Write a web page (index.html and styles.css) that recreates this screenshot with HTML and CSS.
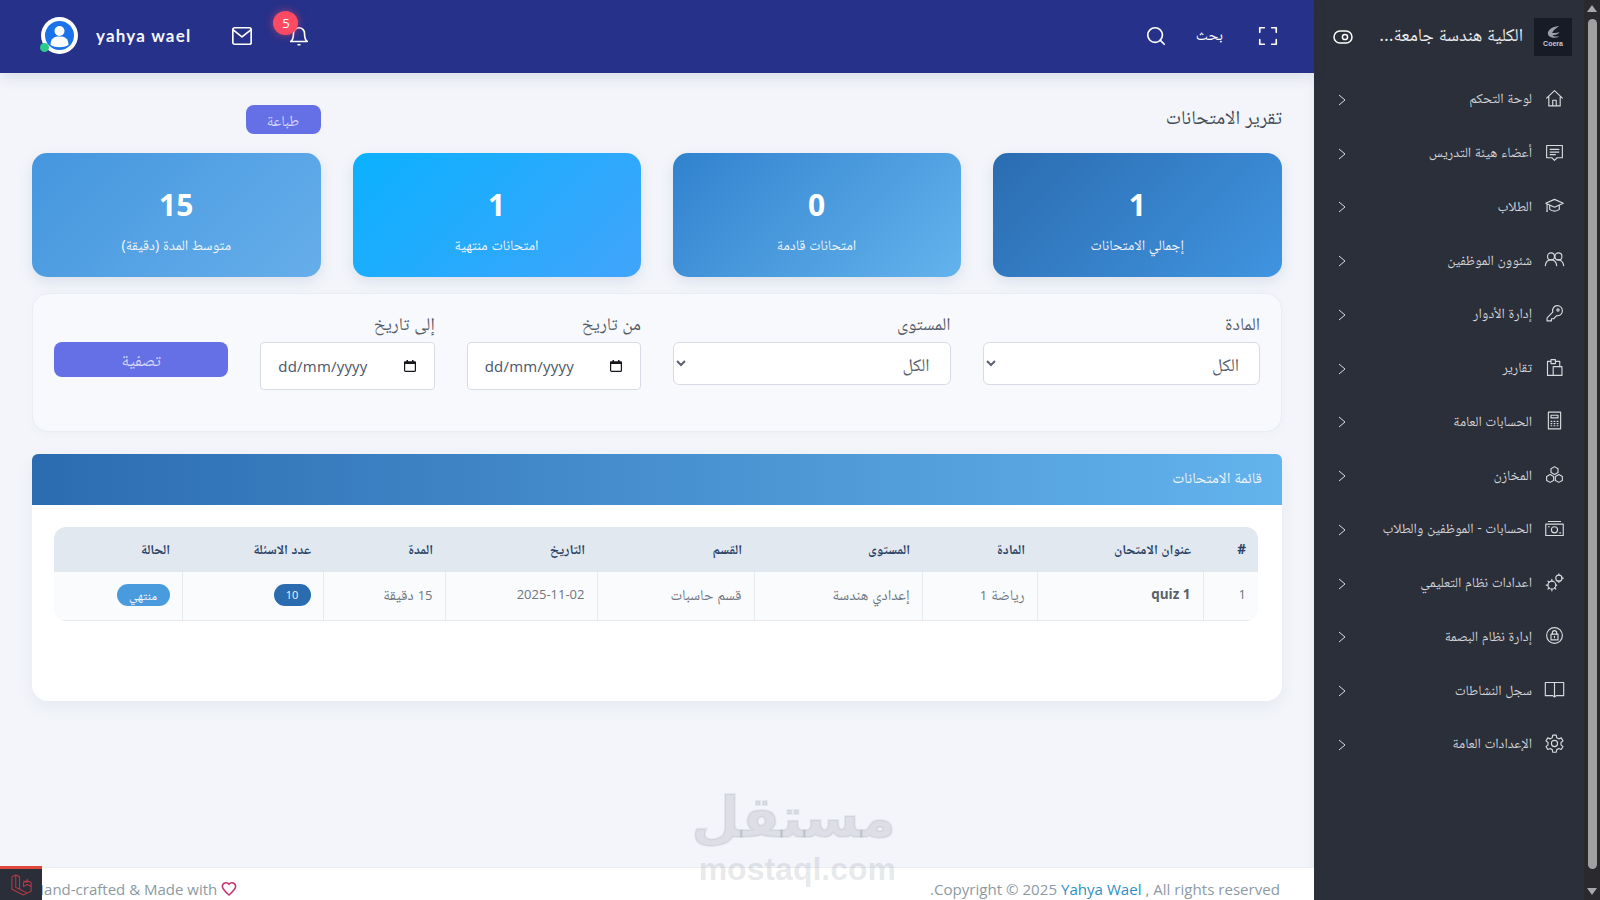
FILE: index.html
```html
<!DOCTYPE html>
<html lang="ar" dir="rtl">
<head>
<meta charset="utf-8">
<title>تقرير الامتحانات</title>
<link rel="stylesheet" href="styles.css">
</head>
<body>
<div class="app">
  <div class="scrollbar">
    <span class="arrow-up"></span>
    <span class="thumb"></span>
    <span class="arrow-down"></span>
  </div>
  <aside class="sidebar">
    <div class="brand">
      <div class="logo">
        <svg class="logo-mark" viewBox="0 0 16 14"><path d="M14 0C8 .5 3 3 2 7c-.7 3.500 3 6.500 9 5.500 1.500-.3 2.500-1 3-1.500-3 .8-6 .5-7-1 3 0 6-1 7.500-3.500C12 7.500 9 7.800 6.500 7.300 8 4 11.500 2.500 14 0z" fill="#9c9fa8"/></svg>
        <span class="logo-text">Coera</span>
      </div>
      <div class="brand-name">الكلية هندسة جامعة...</div>
      <svg class="toggle" viewBox="0 0 20 14" fill="none" stroke="#fff" stroke-width="1.5"><rect x="1" y="1" width="18" height="12" rx="6"/><circle cx="12" cy="7" r="2.6"/></svg>
    </div>
    <nav class="menu">
      <a class="item"><svg class="ico" viewBox="0 0 24 24"><path d="M3 11.500 12 3l9 8.500M5.500 10v10.500h13V10M10 20.500V14h4v6.500"/></svg><span class="label">لوحة التحكم</span><svg class="chev" viewBox="0 0 8 12"><path d="M1 1l6 5-6 5"/></svg></a>
      <a class="item"><svg class="ico" viewBox="0 0 24 24"><path d="M3 4h18v14h-6l-3 3-3-3H3zM7 8.500h10M7 11.500h10M7 14.500h6"/></svg><span class="label">أعضاء هيئة التدريس</span><svg class="chev" viewBox="0 0 8 12"><path d="M1 1l6 5-6 5"/></svg></a>
      <a class="item"><svg class="ico" viewBox="0 0 24 24"><path d="M12 5 22 9.500 12 14 2 9.500zM6.500 12v4.500c3 2.500 8 2.500 11 0V12M3.500 10.500V17M3 18.500h1"/></svg><span class="label">الطلاب</span><svg class="chev" viewBox="0 0 8 12"><path d="M1 1l6 5-6 5"/></svg></a>
      <a class="item"><svg class="ico" viewBox="0 0 24 24"><circle cx="8" cy="8.500" r="4"/><circle cx="16.500" cy="8.500" r="4"/><path d="M1.500 19c.5-4 3-6.500 6.500-6.500s6 2.500 6.500 6.500M15 12.500c4-.5 7 2 7.500 6.500"/></svg><span class="label">شئوون الموظفين</span><svg class="chev" viewBox="0 0 8 12"><path d="M1 1l6 5-6 5"/></svg></a>
      <a class="item"><svg class="ico" viewBox="0 0 24 24"><path d="M15 3c3.500 0 6 2.500 6 6 0 3.500-3 6-6.500 5.500L11 18H8.500v2.500H3.500V17l6.500-6.500C9 6.500 11.500 3 15 3z"/><circle cx="16" cy="8" r="1.300"/></svg><span class="label">إدارة الأدوار</span><svg class="chev" viewBox="0 0 8 12"><path d="M1 1l6 5-6 5"/></svg></a>
      <a class="item"><svg class="ico" viewBox="0 0 24 24"><path d="M10 21H4V5h4V3h5v2h5v6M8 5v2.500h5V5"/><rect x="10.500" y="11" width="10" height="10"/></svg><span class="label">تقارير</span><svg class="chev" viewBox="0 0 8 12"><path d="M1 1l6 5-6 5"/></svg></a>
      <a class="item"><svg class="ico" viewBox="0 0 24 24"><rect x="5" y="2.500" width="14" height="19"/><path d="M8 6h8v3H8zM8 13h1M11.500 13h1M15 13h1M8 15.500h1M11.500 15.500h1M15 15.500h1M8 18h1M11.500 18h1M15 18h1"/></svg><span class="label">الحسابات العامة</span><svg class="chev" viewBox="0 0 8 12"><path d="M1 1l6 5-6 5"/></svg></a>
      <a class="item"><svg class="ico" viewBox="0 0 24 24"><path d="M12 3l4 2.300v4.500L12 12 8 9.800V5.300zM7 12l4 2.300v4.500L7 21l-4-2.200v-4.500zM17 12l4 2.300v4.500L17 21l-4-2.200v-4.500z"/></svg><span class="label">المخازن</span><svg class="chev" viewBox="0 0 8 12"><path d="M1 1l6 5-6 5"/></svg></a>
      <a class="item"><svg class="ico" viewBox="0 0 24 24"><rect x="2" y="7" width="20" height="13"/><circle cx="12" cy="13.500" r="3.500"/><path d="M5 4h14M5 10h1M18 17h1"/></svg><span class="label">الحسابات - الموظفين والطلاب</span><svg class="chev" viewBox="0 0 8 12"><path d="M1 1l6 5-6 5"/></svg></a>
      <a class="item"><svg class="ico" viewBox="0 0 24 24"><circle cx="9" cy="15" r="4.500"/><circle cx="17" cy="7" r="3.500"/><path d="M9 8.500v2M9 19.500v2M2.500 15h2M13.500 15h1M17 2v1.500M17 10.500V12M22 7h-1.500M4.500 10.500l1.500 1.500M4.500 19.500 6 18M12 18l1.500 1.500"/></svg><span class="label">اعدادات نظام التعليمي</span><svg class="chev" viewBox="0 0 8 12"><path d="M1 1l6 5-6 5"/></svg></a>
      <a class="item"><svg class="ico" viewBox="0 0 24 24"><circle cx="12" cy="12" r="9"/><rect x="8" y="10.500" width="8" height="6.500"/><path d="M9.500 10.500V9a2.500 2.500 0 0 1 5 0v1.500M12 13v1.500"/></svg><span class="label">إدارة نظام البصمة</span><svg class="chev" viewBox="0 0 8 12"><path d="M1 1l6 5-6 5"/></svg></a>
      <a class="item"><svg class="ico" viewBox="0 0 24 24"><path d="M1.500 4h21v15H14l-2 1.500-2-1.500H1.500zM12 4v16"/></svg><span class="label">سجل النشاطات</span><svg class="chev" viewBox="0 0 8 12"><path d="M1 1l6 5-6 5"/></svg></a>
      <a class="item"><svg class="ico" viewBox="0 0 24 24"><circle cx="12" cy="12" r="3.500"/><path d="M10 2.500h4l.6 3 2.300 1.200 2.800-1.100 2 3.400-2.300 1.900v2.600l2.300 2-2 3.400-2.800-1.100-2.300 1.200-.6 3h-4l-.6-3-2.300-1.200-2.800 1.100-2-3.400 2.300-2v-2.600L2.300 9l2-3.400 2.800 1.100 2.300-1.200z"/></svg><span class="label">الإعدادات العامة</span><svg class="chev" viewBox="0 0 8 12"><path d="M1 1l6 5-6 5"/></svg></a>
    </nav>
  </aside>
  <div class="main">
    <header class="topbar">
      <div class="top-group">
        <svg class="top-ico" viewBox="0 0 24 24"><path d="M3 8V3h5M16 3h5v5M21 16v5h-5M8 21H3v-5"/></svg>
        <span class="search-word">بحث</span>
        <svg class="top-ico" viewBox="0 0 24 24"><circle cx="11" cy="11" r="8"/><path d="M21 21l-4.500-4.500"/></svg>
      </div>
      <div class="top-group">
        <div class="bell-wrap">
          <svg class="top-ico bell" viewBox="0 0 24 24"><path d="M18 9a6 6 0 0 0-12 0c0 7-3 9-3 9h18s-3-2-3-9M11 21.500h2"/></svg>
          <span class="badge">5</span>
        </div>
        <svg class="top-ico mail" viewBox="0 0 24 24"><rect x="2" y="3" width="20" height="18" rx="2"/><path d="M2 5l10 8 10-8"/></svg>
        <span class="username">yahya wael</span>
        <div class="avatar">
          <svg viewBox="0 0 37 37"><circle cx="18.500" cy="18.500" r="18.500" fill="#fff"/><circle cx="18.500" cy="18.500" r="14.500" fill="#1a73e8"/><circle cx="18.500" cy="14" r="5" fill="#fff"/><path d="M9.500 28c0-7 4-8.500 9-8.500s9 1.500 9 8.500c-5 3-13 3-18 0z" fill="#fff"/></svg>
          <span class="online"></span>
        </div>
      </div>
    </header>
    <div class="content">
      <div class="title-row">
        <h1 class="page-title">تقرير الامتحانات</h1>
        <button class="btn print">طباعة</button>
      </div>
      <section class="stats">
        <div class="stat stat-a"><strong>1</strong><span>إجمالي الامتحانات</span></div>
        <div class="stat stat-b"><strong>0</strong><span>امتحانات قادمة</span></div>
        <div class="stat stat-c"><strong>1</strong><span>امتحانات منتهية</span></div>
        <div class="stat stat-d"><strong>15</strong><span>متوسط المدة (دقيقة)</span></div>
      </section>
      <form class="filters">
        <div class="field"><label>المادة</label><select><option>الكل</option></select></div>
        <div class="field"><label>المستوى</label><select><option>الكل</option></select></div>
        <div class="field"><label>من تاريخ</label><div class="date" dir="ltr"><span>dd/mm/yyyy</span><svg viewBox="0 0 12 12"><path class="cal-top" d="M0 1.500h12V4H0zM2.500 0h1.500v2H2.500zM8 0h1.500v2H8z"/><rect class="cal-body" x=".6" y="2" width="10.800" height="9.400" rx="1"/></svg></div></div>
        <div class="field"><label>إلى تاريخ</label><div class="date" dir="ltr"><span>dd/mm/yyyy</span><svg viewBox="0 0 12 12"><path class="cal-top" d="M0 1.500h12V4H0zM2.500 0h1.500v2H2.500zM8 0h1.500v2H8z"/><rect class="cal-body" x=".6" y="2" width="10.800" height="9.400" rx="1"/></svg></div></div>
        <button type="button" class="btn filter-btn">تصفية</button>
      </form>
      <section class="list-card">
        <div class="list-head">قائمة الامتحانات</div>
        <div class="table-wrap">
          <table>
            <colgroup><col class="c-num"><col class="c-title"><col class="c-sub"><col class="c-lvl"><col class="c-dep"><col class="c-date"><col class="c-dur"><col class="c-cnt"><col class="c-st"></colgroup>
            <thead><tr><th>#</th><th>عنوان الامتحان</th><th>المادة</th><th>المستوى</th><th>القسم</th><th>التاريخ</th><th>المدة</th><th>عدد الاسئلة</th><th>الحالة</th></tr></thead>
            <tbody><tr><td class="num">1</td><td class="bold">quiz 1</td><td>رياضة <span class="num">1</span></td><td>إعدادي هندسة</td><td>قسم حاسبات</td><td class="num">2025-11-02</td><td><span class="num">15</span> دقيقة</td><td><span class="pill pill-dark">10</span></td><td><span class="pill pill-light">منتهي</span></td></tr></tbody>
          </table>
        </div>
      </section>
    </div>
    <footer class="footer">
      <span class="copy">Copyright © 2025 <a class="link">Yahya Wael</a> , All rights reserved.</span>
      <span class="made" dir="ltr">Hand-crafted &amp; Made with <svg class="heart" viewBox="0 0 24 24"><path d="M12 21C5 15 2 12 2 8a5.500 5.500 0 0 1 10-3 5.500 5.500 0 0 1 10 3c0 4-3 7-10 13z"/></svg></span>
    </footer>
  </div>
</div>
<div class="watermark"><div class="wm-ar">مستقل</div><div class="wm-en">mostaql.com</div></div>
<div class="debugbar"><svg viewBox="0 0 24 24"><path d="M2 4l4-2 4 2v13l8 4 4-2v-5l-4-2-4 2v-4l4-2 4 2v4M2 4v13l12 6 4-2M6 2v13l8 4M10 17l-4-2M18 6v4M14 8l4 2"/></svg></div>
</body>
</html>
```
FILE: styles.css
```css
* { box-sizing: border-box; }
html, body { margin: 0; height: 100%; overflow: hidden; }
body { font-family: "Open Sans", "Noto Naskh Arabic", "DejaVu Sans", sans-serif; color: #4a5568; background: #f3f5fa; }
.app { display: flex; height: 900px; width: 1600px; }

.scrollbar { width: 16px; flex: none; background: #2a2a2c; display: flex; flex-direction: column; align-items: center; padding: 5px 0; }
.thumb { width: 9px; flex: 1; background: #a0a0a0; border-radius: 5px; margin: 7px 0 19px; }
.arrow-up { width: 0; height: 0; border: 5px solid transparent; border-top: 0; border-bottom: 7px solid #a8a8a8; }
.arrow-down { width: 0; height: 0; border: 5px solid transparent; border-bottom: 0; border-top: 7px solid #a8a8a8; }

.sidebar { width: 270px; flex: none; background: #2b2f3a; color: #d2d4d8; }
.brand { height: 73px; display: flex; align-items: center; padding: 0 12px 0 19px; }
.logo { width: 38px; height: 38px; background: #171b25; display: flex; flex-direction: column; align-items: center; justify-content: center; flex: none; }
.logo-mark { width: 15px; height: 13px; }
.logo-text { font-family: "Liberation Sans", sans-serif; font-size: 7px; font-weight: 700; color: #c8cad0; line-height: 9px; }
.brand-name { flex: 1; margin: -5px 11px 0 0; font-size: 18.3px; line-height: 28px; color: #eceef0; white-space: nowrap; }
.toggle { width: 20px; height: 14px; flex: none; }
.menu { display: flex; flex-direction: column; }
.item { height: 53.75px; display: flex; align-items: center; padding: 0 19px 0 24px; }
.ico { width: 21px; height: 21px; flex: none; margin-bottom: 3px; fill: none; stroke: #d8dadd; stroke-width: 1.3; stroke-linejoin: round; stroke-linecap: round; }
.label { flex: 1; margin: 0 12px 3px 0; font-size: 14px; line-height: 20px; white-space: nowrap; }
.chev { width: 8px; height: 12px; flex: none; fill: none; stroke: #d8dadd; stroke-width: 1; }

.main { flex: 1; min-width: 0; display: flex; flex-direction: column; box-shadow: inset -12px 0 12px -12px rgba(0,0,0,.06); }
.topbar { height: 73px; flex: none; background: #263189; display: flex; justify-content: space-between; align-items: center; padding: 0 35px 2px 41px; box-shadow: 0 4px 14px rgba(40,50,90,.12); color: #fff; }
.top-group { display: flex; align-items: center; }
.top-ico { width: 22px; height: 22px; fill: none; stroke: #fff; stroke-width: 1.8; stroke-linecap: round; stroke-linejoin: round; flex: none; }
.search-word { margin: -3px 34px 0 29px; font-size: 15.5px; line-height: 24px; }
.bell-wrap { position: relative; width: 22px; height: 22px; }
.bell { display: block; }
.badge { position: absolute; top: -14px; right: 12px; width: 25px; height: 24px; border-radius: 50%; background: #ff4a63; box-shadow: 0 0 8px rgba(255,74,99,.55); color: #fff; font-size: 13px; display: flex; align-items: center; justify-content: center; }
.mail { margin: 0 35px 0 40px; }
.username { font-family: "Lato", sans-serif; font-weight: 700; font-size: 17px; letter-spacing: 1.2px; color: #f4f6fb; margin-left: 18px; }
.avatar { position: relative; width: 37px; height: 37px; }
.avatar svg { display: block; width: 37px; height: 37px; }
.online { position: absolute; left: -1px; bottom: 2px; width: 9px; height: 9px; border-radius: 50%; background: #2bc98a; }

.content { flex: 1; padding: 32px 32px 0; display: flex; flex-direction: column; }
.title-row { display: grid; grid-template-columns: 289.5px 288px 288px 1fr; column-gap: 32px; height: 29px; margin-bottom: 19px; align-items: center; }
.page-title { grid-column: 1 / span 3; margin: -5px 0 0; font-size: 19.600px; line-height: 30px; font-weight: 400; color: #444a55; }
.btn { font-family: inherit; border: 0; background: #656fe6; color: rgba(255,255,255,.72); border-radius: 8px; }
.print { width: 75px; height: 29px; font-size: 15px; line-height: 20px; padding: 0; justify-self: start; }

.stats { display: grid; grid-template-columns: 289.5px 288px 288px 1fr; gap: 32px; }
.stat { height: 124px; border-radius: 15px; display: flex; flex-direction: column; align-items: center; color: #fff; padding-top: 32px; box-shadow: 0 5px 14px rgba(60,90,140,.13); }
.stat strong { font-size: 30px; line-height: 40px; font-weight: 700; }
.stat span { margin-top: 10px; font-size: 14.4px; line-height: 20px; color: #f2f6fb; }
.stat-a { background: linear-gradient(135deg, #2b6cb0, #4094e0); }
.stat-b { background: linear-gradient(135deg, #3182ce, #63b3ed); }
.stat-c { background: linear-gradient(135deg, #0bb1ff, #41a4fb); }
.stat-d { background: linear-gradient(135deg, #4496de, #66aeea); }

.filters { margin-top: 16px; background: #f7f9fd; border: 1px solid #e9edf4; border-radius: 16px; padding: 21px 21px 41px; display: grid; grid-template-columns: 277.5px 277.5px 1fr 1fr 1fr; column-gap: 32px; align-items: start; box-shadow: 0 2px 8px rgba(60,80,120,.03); }
.field { display: flex; flex-direction: column; }
.field label { font-size: 18px; line-height: 16px; margin-bottom: 11px; color: #555c68; }
.field select { height: 43px; background: #fff; border: 1px solid #d6dbe6; border-radius: 6px; padding: 0 16px; font-family: inherit; font-size: 18px; color: #5b6270; }
.date { height: 48px; background: #fff; border: 1px solid #d6dbe6; border-radius: 4px; padding: 0 18px 0 17px; font-size: 15px; color: #4a5568; display: flex; align-items: center; justify-content: space-between; letter-spacing: .2px; }
.date svg { width: 12px; height: 12px; }
.cal-top { fill: #15171c; }
.cal-body { fill: none; stroke: #15171c; stroke-width: 1.2; }
.filter-btn { margin-top: 27px; height: 35px; width: 100%; font-size: 17px; line-height: 24px; padding: 0; }

.list-card { margin-top: 22px; background: #fff; border-radius: 6px 6px 16px 16px; box-shadow: 0 6px 16px rgba(60,80,120,.07); height: 247px; }
.list-head { height: 51px; border-radius: 6px 6px 0 0; background: linear-gradient(90deg, #2b6cb0, #63b3ed); color: #f0f5fb; font-size: 15.3px; display: flex; align-items: center; padding: 0 20px; }
.table-wrap { margin: 22px 24px 0 22px; border-radius: 12px; overflow: hidden; }
table { width: 100%; border-collapse: collapse; table-layout: fixed; }
.c-num { width: 55px; } .c-title { width: 166px; } .c-sub { width: 115px; } .c-lvl { width: 168px; } .c-dep { width: 157px; } .c-date { width: 152px; } .c-dur { width: 122px; } .c-cnt { width: 141px; } .c-st { width: 128px; }
th { height: 45px; background: #e2e8f0; color: #2a4365; font-size: 13.6px; line-height: 20px; font-weight: 700; text-align: right; padding: 0 12px 2px 13px; }
td { height: 48px; background: #f9fbfd; color: #6f7680; font-size: 15px; line-height: 22px; text-align: right; padding: 0 12px 3px 13px; border-left: 1px solid #e6eaef; border-bottom: 1px solid #e6eaef; }
td:last-child { border-left: 0; }
.num { font-size: 13px; }
.bold { font-weight: 700; color: #5b6068; font-size: 13.5px; }
.pill { display: inline-flex; align-items: center; justify-content: center; height: 22px; border-radius: 11px; color: #f2f6fb; font-size: 13px; vertical-align: middle; }
.pill-dark { width: 37px; background: #2b6cb0; font-size: 11px; }
.pill-light { width: 53px; background: #4a9ade; }

.footer { height: 33px; flex: none; background: #fff; border-top: 1px solid #e9ecf1; display: flex; justify-content: space-between; padding: 10px 34px 0 33px; font-size: 15.1px; line-height: 22px; color: #8d9aa3; white-space: nowrap; }
.link { color: #2f8fc4; }
.made { display: flex; align-items: center; gap: 4px; height: 22px; font-size: 15px; }
.heart { width: 16px; height: 16px; fill: none; stroke: #c4366f; stroke-width: 2.4; stroke-linejoin: round; }

.watermark { position: absolute; left: 704px; top: 783px; width: 192px; text-align: center; color: rgba(110,115,130,.17); pointer-events: none; }
.wm-ar { font-family: "DejaVu Sans", sans-serif; font-weight: 700; font-size: 56px; line-height: 70px; padding-left: 4px; white-space: nowrap; -webkit-text-stroke: 2px rgba(110,115,130,.1); }
.wm-en { font-family: "Liberation Sans", sans-serif; font-weight: 700; font-size: 32px; line-height: 32px; }
.debugbar { position: absolute; left: 0; bottom: 0; width: 42px; height: 34px; background: #2a2e38; border-top: 3px solid #e0483e; display: flex; align-items: center; justify-content: center; }
.debugbar svg { width: 23px; height: 23px; fill: none; stroke: #b63a48; stroke-width: 1.1; stroke-linejoin: round; }
```
